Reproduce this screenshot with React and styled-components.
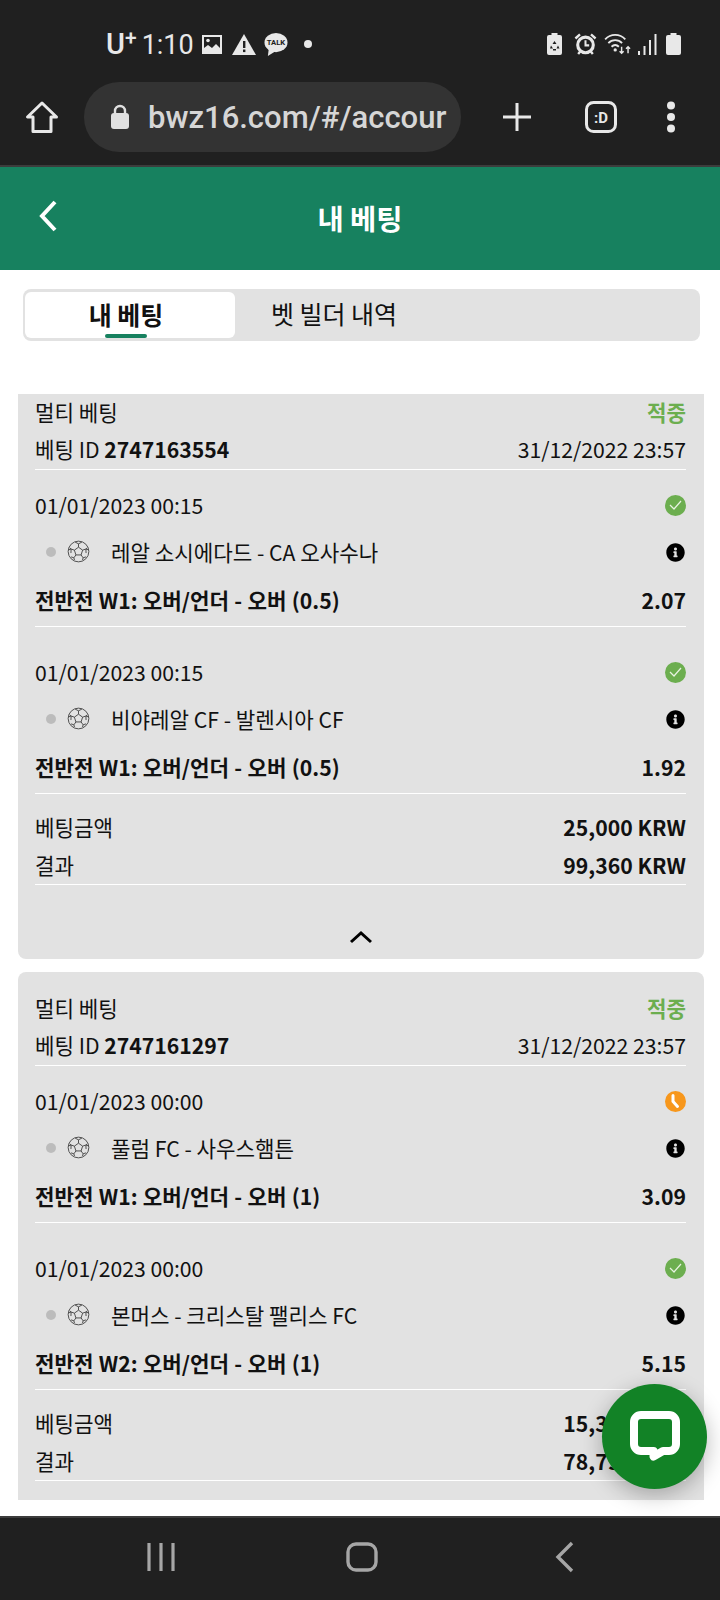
import styled, { createGlobalStyle } from 'styled-components';
import { FaInfoCircle } from 'react-icons/fa';

const GlobalStyle = createGlobalStyle`
  html, body { margin: 0; padding: 0; background: #fff; }
  * { box-sizing: border-box; }
  body { font-family: "Noto Sans CJK KR", "Noto Sans", sans-serif; }
`;

const Page = styled.div`
  position: relative;
  width: 720px;
  height: 1600px;
  overflow: hidden;
  display: flex;
  flex-direction: column;
  background: #fff;
  color: #111;
`;

const Chrome = styled.div`
  height: 167px;
  background: #202020;
  border-bottom: 2px solid #3c3c3c;
  color: #e8e8e8;
`;

const StatusBar = styled.div`
  height: 82px;
  padding: 6px 39px 0 106px;
  display: flex;
  align-items: center;
  justify-content: space-between;
`;

const StatusGroup = styled.div`
  display: flex;
  align-items: center;
`;

const Carrier = styled.span`
  font-family: Roboto, sans-serif;
  font-size: 29px;
  font-weight: 500;
  color: #e8e8e8;
  margin-right: 5px;
  sup { font-size: 21px; line-height: 0; vertical-align: 9px; }
`;

const Clock = styled.span`
  font-family: Roboto, sans-serif;
  font-size: 27px;
  color: #e8e8e8;
  margin-right: 8px;
  padding-top: 1px;
`;

const StatusIcon = styled.span`
  display: flex;
  margin-left: ${p => p.$left || 0}px;
`;

const Toolbar = styled.div`
  height: 83px;
  padding: 0 0 13px 25px;
  display: flex;
  align-items: center;
`;

const UrlPill = styled.div`
  width: 377px;
  height: 70px;
  margin-left: 25px;
  padding-left: 26px;
  border-radius: 35px;
  background: #333333;
  display: flex;
  align-items: center;
  gap: 18px;
  overflow: hidden;
  white-space: nowrap;
`;

const UrlText = styled.span`
  font-family: Roboto, sans-serif;
  font-size: 31px;
  font-weight: 500;
  color: #d6d6d6;
`;

const ToolIcon = styled.div`
  display: flex;
  margin-left: ${p => p.$left}px;
`;

const Header = styled.div`
  height: 103px;
  background: #17815f;
  color: #fff;
  display: flex;
  align-items: center;
  justify-content: center;
  position: relative;
  font-size: 28.500px;
  font-weight: 700;
  padding-bottom: 2px;
`;

const BackButton = styled.div`
  position: absolute;
  left: 38px;
  top: 33px;
  display: flex;
`;

const TabBar = styled.div`
  margin: 19px 20px 0 23px;
  height: 52px;
  padding: 3px 2px;
  border-radius: 8px;
  background: #e2e2e2;
  display: flex;
`;

const Tab = styled.div`
  position: relative;
  width: 210px;
  height: 46px;
  border-radius: 6px;
  background: ${p => (p.$active ? '#fff' : 'transparent')};
  font-size: 25px;
  font-weight: ${p => (p.$active ? 700 : 400)};
  display: flex;
  align-items: center;
  justify-content: center;
  color: #111;
  padding: ${p => (p.$active ? '0 8px 2px 0' : '0 12px 4px 0')};
`;

const TabMark = styled.span`
  position: absolute;
  left: 80px;
  bottom: 0;
  width: 42px;
  height: 4px;
  border-radius: 2px;
  background: #17815f;
`;

const List = styled.div`
  flex: 1;
  padding: 53px 16px 0 18px;
  display: flex;
  flex-direction: column;
  gap: 13px;
  overflow: hidden;
`;

const Card = styled.div`
  background: #e2e2e2;
  padding: ${p => (p.$clipped ? '0' : '18px')} 18px 0 17px;
  border-radius: ${p => (p.$clipped ? '0 0 8px 8px' : '8px 8px 0 0')};
  height: ${p => p.$height}px;
  flex: none;
`;

const Row = styled.div`
  display: flex;
  justify-content: space-between;
  align-items: center;
  height: ${p => p.$h}px;
  padding-bottom: ${p => p.$pb ?? 2}px;
  font-size: 21.200px;
  line-height: 1;
  white-space: nowrap;
`;

const Won = styled.span`
  color: #6cae4f;
  font-weight: 700;
`;

const Bold = styled.b`
  font-weight: 700;
`;

const Market = styled.b`
  font-weight: 700;
  word-spacing: 0.5px;
`;

const Rule = styled.div`
  height: 1px;
  background: #fff;
  margin-bottom: ${p => p.$after || 0}px;
`;

const Totals = styled.div`
  margin-top: -11px;
`;

const MatchName = styled.div`
  display: flex;
  align-items: center;
`;

const Dot = styled.span`
  width: 10px;
  height: 10px;
  margin: 0 11px;
  border-radius: 50%;
  background: #bcbcbc;
`;

const StatusDot = styled.span`
  width: 21px;
  height: 21px;
  border-radius: 50%;
  background: ${p => p.$color};
  display: flex;
  align-items: center;
  justify-content: center;
`;

const Info = styled(FaInfoCircle)`
  width: 19px;
  height: 19px;
  margin: 2px 1px 0 0;
  color: #000;
`;

const Collapse = styled.div`
  height: 74px;
  padding-top: 30px;
  display: flex;
  align-items: center;
  justify-content: center;
`;

const ChatFab = styled.div`
  position: absolute;
  left: 602px;
  top: 1384px;
  width: 105px;
  height: 105px;
  border-radius: 50%;
  background: #128226;
  box-shadow: 0 6px 22px rgba(0, 0, 0, 0.28);
  display: flex;
  align-items: center;
  justify-content: center;
`;

const NavBar = styled.div`
  height: 84px;
  background: #202020;
  border-top: 2px solid #3c3c3c;
  padding-bottom: 4px;
  display: flex;
  align-items: center;
`;

const NavSlot = styled.div`
  flex: none;
  width: ${p => p.$w}px;
  padding-left: ${p => p.$pad || 0}px;
  display: flex;
  justify-content: center;
`;

const ImageIcon = () => (
  <svg width="20" height="19" viewBox="0 0 20 19">
    <rect x="1" y="1" width="18" height="17" fill="none" stroke="#e8e8e8" strokeWidth="2" />
    <path d="M2 17v-4l4-3 4 3 4-4 4 4v4z" fill="#e8e8e8" />
    <circle cx="6" cy="5.500" r="1.800" fill="#e8e8e8" />
  </svg>
);

const WarnIcon = () => (
  <svg width="24" height="21" viewBox="0 0 24 21">
    <path d="M12 0 24 21H0z" fill="#e8e8e8" />
    <rect x="11" y="7" width="2.400" height="7" fill="#202020" />
    <rect x="11" y="15.500" width="2.400" height="2.600" fill="#202020" />
  </svg>
);

const TalkIcon = () => (
  <svg width="24" height="23" viewBox="0 0 25 24">
    <ellipse cx="12.500" cy="10" rx="12" ry="10" fill="#e8e8e8" />
    <path d="M5 16 4 24l8-5z" fill="#e8e8e8" />
    <text x="12.500" y="13" fontSize="8" fontWeight="700" textAnchor="middle" fill="#202020" fontFamily="Roboto">TALK</text>
  </svg>
);

const BatteryIcon = ({ saver }) => (
  <svg width="15" height="22" viewBox="0 0 15 22">
    <path d="M4.500 0h6v2H13a2 2 0 0 1 2 2v16a2 2 0 0 1-2 2H2a2 2 0 0 1-2-2V4a2 2 0 0 1 2-2h2.500z" fill="#e8e8e8" />
    {saver && <path d="M7.500 8l2 3H5.500zM4 12.500l2 3H3zM11 12.500l1.500 3h-3zM6 16h3v1.500H6z" fill="#202020" />}
  </svg>
);

const AlarmIcon = () => (
  <svg width="23" height="22" viewBox="0 0 24 24" fill="none" stroke="#e8e8e8">
    <circle cx="12" cy="13" r="8.500" strokeWidth="3.400" />
    <path d="M12 8v5.500h4" strokeWidth="2.200" />
    <path d="M1 6l5-4.500M23 6l-5-4.500M4 23l2.500-3M20 23l-2.500-3" strokeWidth="2.600" />
  </svg>
);

const WifiIcon = () => (
  <svg width="29" height="22" viewBox="0 0 29 24" fill="none" stroke="#e8e8e8" strokeWidth="2">
    <path d="M1 7c6-6.500 16-6.500 22 0M4.500 11c4-4.200 11-4.200 15 0M8 15c2.500-2.500 5.500-2.500 8 0" />
    <circle cx="12" cy="18.500" r="1.800" fill="#e8e8e8" stroke="none" />
    <path d="M19 15v7m-2.200-2.200 2.200 2.200 2.200-2.200M26 22v-7m-2.200 2.200 2.200-2.200 2.200 2.200" strokeWidth="1.600" />
  </svg>
);

const SignalIcon = () => (
  <svg width="19" height="21" viewBox="0 0 19 21" fill="#e8e8e8">
    <rect x="0" y="17" width="2" height="4" />
    <rect x="5.500" y="12" width="2" height="9" />
    <rect x="11" y="6" width="2" height="15" />
    <rect x="16.500" y="0" width="2" height="21" />
  </svg>
);

const HomeIcon = () => (
  <svg width="34" height="34" viewBox="0 0 34 34" fill="none" stroke="#e8e8e8" strokeWidth="3" strokeLinejoin="round">
    <path d="M17 3 2.500 17H8v14.500h18V17h5.500z" />
  </svg>
);

const LockIcon = () => (
  <svg width="20" height="26" viewBox="0 0 20 26" style={{ flex: 'none' }}>
    <path d="M5 10V7a5 5 0 0 1 10 0v3" fill="none" stroke="#e0e0e0" strokeWidth="2.400" />
    <rect x="1" y="9" width="18" height="16" rx="3" fill="#e0e0e0" />
  </svg>
);

const PlusIcon = () => (
  <svg width="30" height="30" viewBox="0 0 30 30" stroke="#e8e8e8" strokeWidth="3">
    <path d="M15 1v28M1 15h28" />
  </svg>
);

const TabsIcon = () => (
  <svg width="32" height="32" viewBox="0 0 32 32">
    <rect x="1.500" y="1.500" width="29" height="29" rx="7" fill="none" stroke="#e8e8e8" strokeWidth="3" />
    <text x="16" y="22" fontSize="15" fontWeight="700" textAnchor="middle" fill="#e8e8e8" fontFamily="Roboto">:D</text>
  </svg>
);

const MenuIcon = () => (
  <svg width="10" height="32" viewBox="0 0 10 32" fill="#e8e8e8">
    <circle cx="5" cy="4.500" r="4" />
    <circle cx="5" cy="16" r="4" />
    <circle cx="5" cy="27.500" r="4" />
  </svg>
);

const CheckIcon = () => (
  <svg width="13" height="10" viewBox="0 0 13 10" fill="none" stroke="#e8f3e2" strokeWidth="1.200">
    <path d="M1 5l4 4 7-8" />
  </svg>
);

const ClockIcon = () => (
  <svg width="13" height="15" viewBox="0 0 13 15" fill="none" stroke="#fff" strokeWidth="3" strokeLinecap="round">
    <path d="M4 1.500v6l4.500 5" />
  </svg>
);

const BallIcon = () => (
  <svg width="23" height="23" viewBox="0 0 24 24" fill="none" stroke="#4a4a4a" strokeWidth="1" style={{ marginRight: 21 }}>
    <circle cx="12" cy="12" r="10.800" />
    <path d="M12 7.500l4.300 3.100-1.600 5h-5.400l-1.600-5zM12 7.500V4M16.300 10.600l3.400-1.200M14.700 15.600l2.100 3M9.300 15.600l-2.100 3M7.700 10.600 4.300 9.400" />
    <path d="M8.500 2.200 12 4l3.500-1.800M19.700 9.400l2.900 1M21.300 8l-1.600 1.400.2 4.200M16.800 18.600l-.6 2.400M16.800 18.600l3-1M7.200 18.600l.6 2.400M7.200 18.600l-3-1M4.300 9.400l-2.900 1M2.700 8l1.600 1.400-.2 4.200" />
  </svg>
);

const bets = [
  {
    id: '2747163554',
    clipped: true,
    height: 565,
    legs: [
      { date: '01/01/2023 00:15', state: 'won', match: '레알 소시에다드 - CA 오사수나', market: '전반전 W1: 오버/언더 - 오버 (0.5)', odds: '2.07' },
      { date: '01/01/2023 00:15', state: 'won', match: '비야레알 CF - 발렌시아 CF', market: '전반전 W1: 오버/언더 - 오버 (0.5)', odds: '1.92' },
    ],
    stake: '25,000 KRW',
    result: '99,360 KRW',
  },
  {
    id: '2747161297',
    height: 528,
    legs: [
      { date: '01/01/2023 00:00', state: 'pending', match: '풀럼 FC - 사우스햄튼', market: '전반전 W1: 오버/언더 - 오버 (1)', odds: '3.09' },
      { date: '01/01/2023 00:00', state: 'won', match: '본머스 - 크리스탈 팰리스 FC', market: '전반전 W2: 오버/언더 - 오버 (1)', odds: '5.15' },
    ],
    stake: '15,300 KRW',
    result: '78,795 KRW',
  },
];

const BetCard = ({ bet }) => (
  <Card $clipped={bet.clipped} $height={bet.height}>
    <Row $h={37}>
      <span>멀티 베팅</span>
      <Won>적중</Won>
    </Row>
    <Row $h={38}>
      <span>베팅 ID <Bold>{bet.id}</Bold></span>
      <span>31/12/2022 23:57</span>
    </Row>
    <Rule $after={16} />
    {bet.legs.map(leg => (
      <div key={leg.match}>
        <Row $h={40}>
          <span>{leg.date}</span>
          {leg.state === 'won'
            ? <StatusDot $color="#6cae4f"><CheckIcon /></StatusDot>
            : <StatusDot $color="#f7971c"><ClockIcon /></StatusDot>}
        </Row>
        <Row $h={53}>
          <MatchName><Dot /><BallIcon />{leg.match}</MatchName>
          <Info />
        </Row>
        <Row $h={47} $pb={5}>
          <Market>{leg.market}</Market>
          <Bold>{leg.odds}</Bold>
        </Row>
        <Rule $after={26} />
      </div>
    ))}
    <Totals>
      <Row $h={38}>
        <span>베팅금액</span>
        <Bold>{bet.stake}</Bold>
      </Row>
      <Row $h={37}>
        <span>결과</span>
        <Bold>{bet.result}</Bold>
      </Row>
    </Totals>
    <Rule />
    {bet.clipped && (
      <Collapse>
        <svg width="24" height="14" viewBox="0 0 24 14" fill="none" stroke="#000" strokeWidth="3">
          <path d="M2 12 12 3l10 9" />
        </svg>
      </Collapse>
    )}
  </Card>
);

export default function App() {
  return (
    <Page>
      <GlobalStyle />
      <Chrome>
        <StatusBar>
          <StatusGroup>
            <Carrier>U<sup>+</sup></Carrier>
            <Clock>1:10</Clock>
            <ImageIcon />
            <StatusIcon $left={10}><WarnIcon /></StatusIcon>
            <StatusIcon $left={8}><TalkIcon /></StatusIcon>
            <StatusIcon $left={16}>
              <svg width="8" height="8"><circle cx="4" cy="4" r="4" fill="#e8e8e8" /></svg>
            </StatusIcon>
          </StatusGroup>
          <StatusGroup>
            <BatteryIcon saver />
            <StatusIcon $left={12}><AlarmIcon /></StatusIcon>
            <StatusIcon $left={6}><WifiIcon /></StatusIcon>
            <StatusIcon $left={6}><SignalIcon /></StatusIcon>
            <StatusIcon $left={9}><BatteryIcon /></StatusIcon>
          </StatusGroup>
        </StatusBar>
        <Toolbar>
          <HomeIcon />
          <UrlPill>
            <LockIcon />
            <UrlText>bwz16.com/#/accour</UrlText>
          </UrlPill>
          <ToolIcon $left={41}><PlusIcon /></ToolIcon>
          <ToolIcon $left={53}><TabsIcon /></ToolIcon>
          <ToolIcon $left={49}><MenuIcon /></ToolIcon>
        </Toolbar>
      </Chrome>
      <Header>
        <BackButton>
          <svg width="20" height="32" viewBox="0 0 20 32" fill="none" stroke="#fff" strokeWidth="4">
            <path d="M17 2 4 16l13 14" />
          </svg>
        </BackButton>
        내 베팅
      </Header>
      <TabBar>
        <Tab $active>내 베팅<TabMark /></Tab>
        <Tab>벳 빌더 내역</Tab>
      </TabBar>
      <List>
        {bets.map(bet => <BetCard key={bet.id} bet={bet} />)}
      </List>
      <ChatFab>
        <svg width="50" height="52" viewBox="0 0 50 52">
          <path d="M11 4h28a7 7 0 0 1 7 7v22a7 7 0 0 1-7 7h-6L23.500 45.500V40H11a7 7 0 0 1-7-7V11a7 7 0 0 1 7-7z" fill="none" stroke="#fff" strokeWidth="8" strokeLinejoin="round" />
        </svg>
      </ChatFab>
      <NavBar>
        <NavSlot $w={322}>
          <svg width="30" height="30" viewBox="0 0 30 30" stroke="#a6a6a6" strokeWidth="3.200">
            <path d="M3 1v28M15 1v28M27 1v28" />
          </svg>
        </NavSlot>
        <NavSlot $w={80}>
          <svg width="32" height="30" viewBox="0 0 32 30" fill="none" stroke="#a6a6a6" strokeWidth="3.400">
            <rect x="2" y="2" width="28" height="26" rx="8" />
          </svg>
        </NavSlot>
        <NavSlot $w={318} $pad={8}>
          <svg width="22" height="32" viewBox="0 0 22 32" fill="none" stroke="#a6a6a6" strokeWidth="3.400">
            <path d="M18 2 4 16l14 14" />
          </svg>
        </NavSlot>
      </NavBar>
    </Page>
  );
}
